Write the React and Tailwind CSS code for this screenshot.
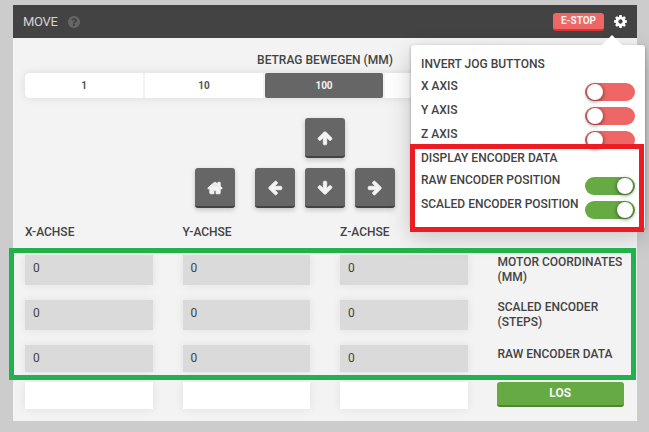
const paths = {
  arrow:
    'M1675 971q0 51-37 90l-75 75q-38 38-91 38-54 0-90-38l-294-293v704q0 52-37.5 84.5t-90.5 32.5h-128q-53 0-90.5-32.5t-37.5-84.5v-704l-294 293q-36 38-90 38t-90-38l-75-75q-38-38-38-90 0-53 38-91l651-651q35-37 90-37 54 0 91 37l651 651q37 39 37 91z',
  home: 'M1472 992v480q0 26-19 45t-45 19h-384v-384h-256v384h-384q-26 0-45-19t-19-45v-480q0-1 .5-3t.5-3l575-474 575 474q1 2 1 6zm223-69l-62 74q-8 9-21 11h-3q-13 0-21-7l-692-577-692 577q-12 8-24 7-13-2-21-11l-62-74q-8-10-7-23.5t11-21.5l719-599q32-26 76-26t76 26l244 204v-195q0-14 9-23t23-9h192q14 0 23 9t9 23v408l219 182q10 8 11 21.5t-7 23.5z',
  cog: 'M1152 896q0-106-75-181t-181-75-181 75-75 181 75 181 181 75 181-75 75-181zm512-109v222q0 12-8 23t-20 13l-185 28q-19 54-39 91 35 50 107 138 10 12 10 25t-9 23q-27 37-99 108t-94 71q-12 0-26-9l-138-108q-44 23-91 38-16 136-29 186-7 28-36 28h-222q-14 0-24.5-8.5t-11.5-21.5l-28-184q-49-16-90-37l-141 107q-10 9-25 9-14 0-25-11-126-114-165-168-7-10-7-23 0-12 8-23 15-21 51-66.5t54-70.5q-27-50-41-99l-183-27q-13-2-21-12.5t-8-23.5v-222q0-12 8-23t19-13l186-28q14-46 39-92-40-57-107-138-10-12-10-24 0-10 9-23 26-36 98.5-107.5t94.5-71.5q13 0 26 10l138 107q44-23 91-38 16-136 29-186 7-28 36-28h222q14 0 24.5 8.5t11.5 21.5l28 184q49 16 90 37l142-107q9-9 24-9 13 0 25 10 129 119 165 170 7 8 7 22 0 12-8 23-15 21-51 66.5t-54 70.5q26 50 41 98l183 28q13 2 21 12.5t8 23.5z',
  help: 'M1024 1376v-192q0-14-9-23t-23-9h-192q-14 0-23 9t-9 23v192q0 14 9 23t23 9h192q14 0 23-9t9-23zm256-672q0-88-55.5-163t-138.5-116-170-41q-243 0-371 213-15 24 8 42l132 100q7 6 19 6 16 0 25-12 53-68 86-92 34-24 86-24 48 0 85.5 26t37.5 59q0 38-20 61t-68 45q-63 28-115.5 86.5t-52.5 125.5v36q0 14 9 23t23 9h192q14 0 23-9t9-23q0-19 21.5-49.5t54.5-49.5q32-18 49-28.5t46-35 44.5-48 28-60.5 12.5-81zm384 192q0 209-103 385.5t-279.5 279.5-385.5 103-385.5-103-279.5-279.5-103-385.5 103-385.5 279.5-279.5 385.5-103 385.5 103 279.5 279.5 103 385.5z',
};

function Icon({ name, className }) {
  return (
    <svg viewBox="0 0 1792 1792" fill="currentColor" className={className}>
      <path d={paths[name]} />
    </svg>
  );
}

function JogButton({ icon, turn = '', className = '' }) {
  return (
    <button
      className={`flex size-10 items-center justify-center rounded-[3px] border-b-2 border-[#434343] bg-[#666] pt-0.5 pr-px text-[#f3f3f3] shadow-[0_2px_5px_rgba(0,0,0,0.2)] ${className}`}
    >
      <Icon
        name={icon}
        className={`size-4 stroke-current ${icon === 'home' ? 'stroke-[110]' : 'stroke-[90]'} ${turn}`}
      />
    </button>
  );
}

function Toggle({ label, on }) {
  return (
    <div className="flex h-6 items-start justify-between">
      <span className="leading-6">{label}</span>
      <button
        className={`mt-[9px] flex h-[18px] w-[50px] shrink-0 items-center rounded-full px-0.5 ${
          on ? 'justify-end bg-[#66aa44]' : 'bg-[#ee6666]'
        }`}
      >
        <span className="size-4 rounded-full bg-white shadow-[0_1px_4px_rgba(0,0,0,0.6)]" />
      </button>
    </div>
  );
}

function SettingsMenu() {
  return (
    <div className="absolute top-10 left-[398px] h-[184px] w-[234px] rounded-[3px] bg-white px-2.5 pt-[7px] shadow-[0_1px_3px_rgba(0,0,0,0.35),0_8px_24px_rgba(0,0,0,0.2)]">
      <span className="absolute -top-[10px] left-[191px] border-x-[10px] border-b-[10px] border-x-transparent border-b-white" />
      <div className="leading-6">INVERT JOG BUTTONS</div>
      <div className="-mt-[2px]">
        <Toggle label="X AXIS" />
        <Toggle label="Y AXIS" />
        <Toggle label="Z AXIS" />
      </div>
      <div className="leading-6">DISPLAY ENCODER DATA</div>
      <div className="-mt-[2px]">
        <Toggle label="RAW ENCODER POSITION" on />
        <Toggle label="SCALED ENCODER POSITION" on />
      </div>
    </div>
  );
}

const axes = ['X-ACHSE', 'Y-ACHSE', 'Z-ACHSE'];
const rows = ['MOTOR COORDINATES (MM)', 'SCALED ENCODER (STEPS)', 'RAW ENCODER DATA'];
const steps = ['1', '10', '100', '', ''];

export default function App() {
  return (
    <div className="relative h-[432px] w-[649px] overflow-hidden bg-[#ccc] px-[13px] pt-[5px] pr-3 font-['Roboto',sans-serif] text-[12px] font-medium text-[#434343]">
      <div className="relative h-[416px] w-[624px] bg-[#f3f3f3]">
        <header className="flex h-[33px] items-center bg-[#434343] pr-[9px] pl-2.5">
          <span className="w-[37px] text-[13px] font-normal tracking-[-0.3px] text-[#d5d5d5]">MOVE</span>
          <Icon name="help" className="ml-[7px] size-3.5 text-[#666]" />
          <button className="ml-auto h-[18px] w-[51px] rounded-[3px] border-b-2 border-[#dd3333] bg-[#ee6666] text-[10px] leading-4 font-bold text-[#f3f3f3]">
            E-STOP
          </button>
          <Icon name="cog" className="ml-[9px] size-[15px] text-white" />
        </header>

        <main className="px-3">
          <div className="pt-[14px] text-center leading-4">BETRAG BEWEGEN (MM)</div>
          <div className="mt-[5px] grid h-[25px] w-[598px] grid-cols-5 gap-0.5 overflow-hidden rounded-[5px] text-center text-[10px] leading-[24px] font-bold text-[#555] shadow-[0_0_8px_rgba(0,0,0,0.1)]">
            {steps.map((s, i) => (
              <button
                key={i}
                className={s === '100' ? 'rounded-[2px] bg-[#666] text-[#f3f3f3]' : 'rounded-[2px] bg-white'}
              >
                {s}
              </button>
            ))}
          </div>

          <div className="mt-5 flex justify-center">
            <JogButton icon="arrow" />
          </div>
          <div className="mt-2.5 ml-[170px] flex gap-2.5">
            <JogButton icon="home" className="mr-2.5" />
            <JogButton icon="arrow" turn="-rotate-90" />
            <JogButton icon="arrow" turn="rotate-180" />
            <JogButton icon="arrow" turn="rotate-90" />
          </div>

          <div className="mt-4 grid grid-cols-4 gap-[30px] leading-4">
            {axes.map((a) => (
              <span key={a}>{a}</span>
            ))}
          </div>
          <div className="mt-[15px] flex flex-col gap-[18px]">
            {rows.map((label, i) => (
              <div key={label} className="grid h-[27px] grid-cols-4 gap-[30px]">
                {axes.map((a) => (
                  <div
                    key={a}
                    className="bg-[#dadada] pl-2 leading-[27px] font-normal shadow-[0_0_10px_rgba(0,0,0,0.08)]"
                  >
                    0
                  </div>
                ))}
                <span className={i === 2 ? 'pt-0.5 leading-[15px]' : 'leading-[15px]'}>{label}</span>
              </div>
            ))}
          </div>
          <div className="mt-2.5 grid h-[27px] grid-cols-4 gap-[30px]">
            {axes.map((a) => (
              <div key={a} className="bg-white shadow-[0_0_10px_rgba(0,0,0,0.08)]" />
            ))}
            <button className="mr-px -ml-px h-[25px] rounded-[3px] border-b-2 border-[#4f8535] bg-[#66aa44] leading-[21px] font-bold text-[#f3f3f3]">
              LOS
            </button>
          </div>
        </main>

        <SettingsMenu />
      </div>

      <div className="absolute top-[248px] left-[9px] h-[132px] w-[627px] border-5 border-[#22b14c]" />
      <div className="absolute top-[144px] left-[410px] h-[88px] w-[234px] border-5 border-[#ed1c24]" />
    </div>
  );
}
